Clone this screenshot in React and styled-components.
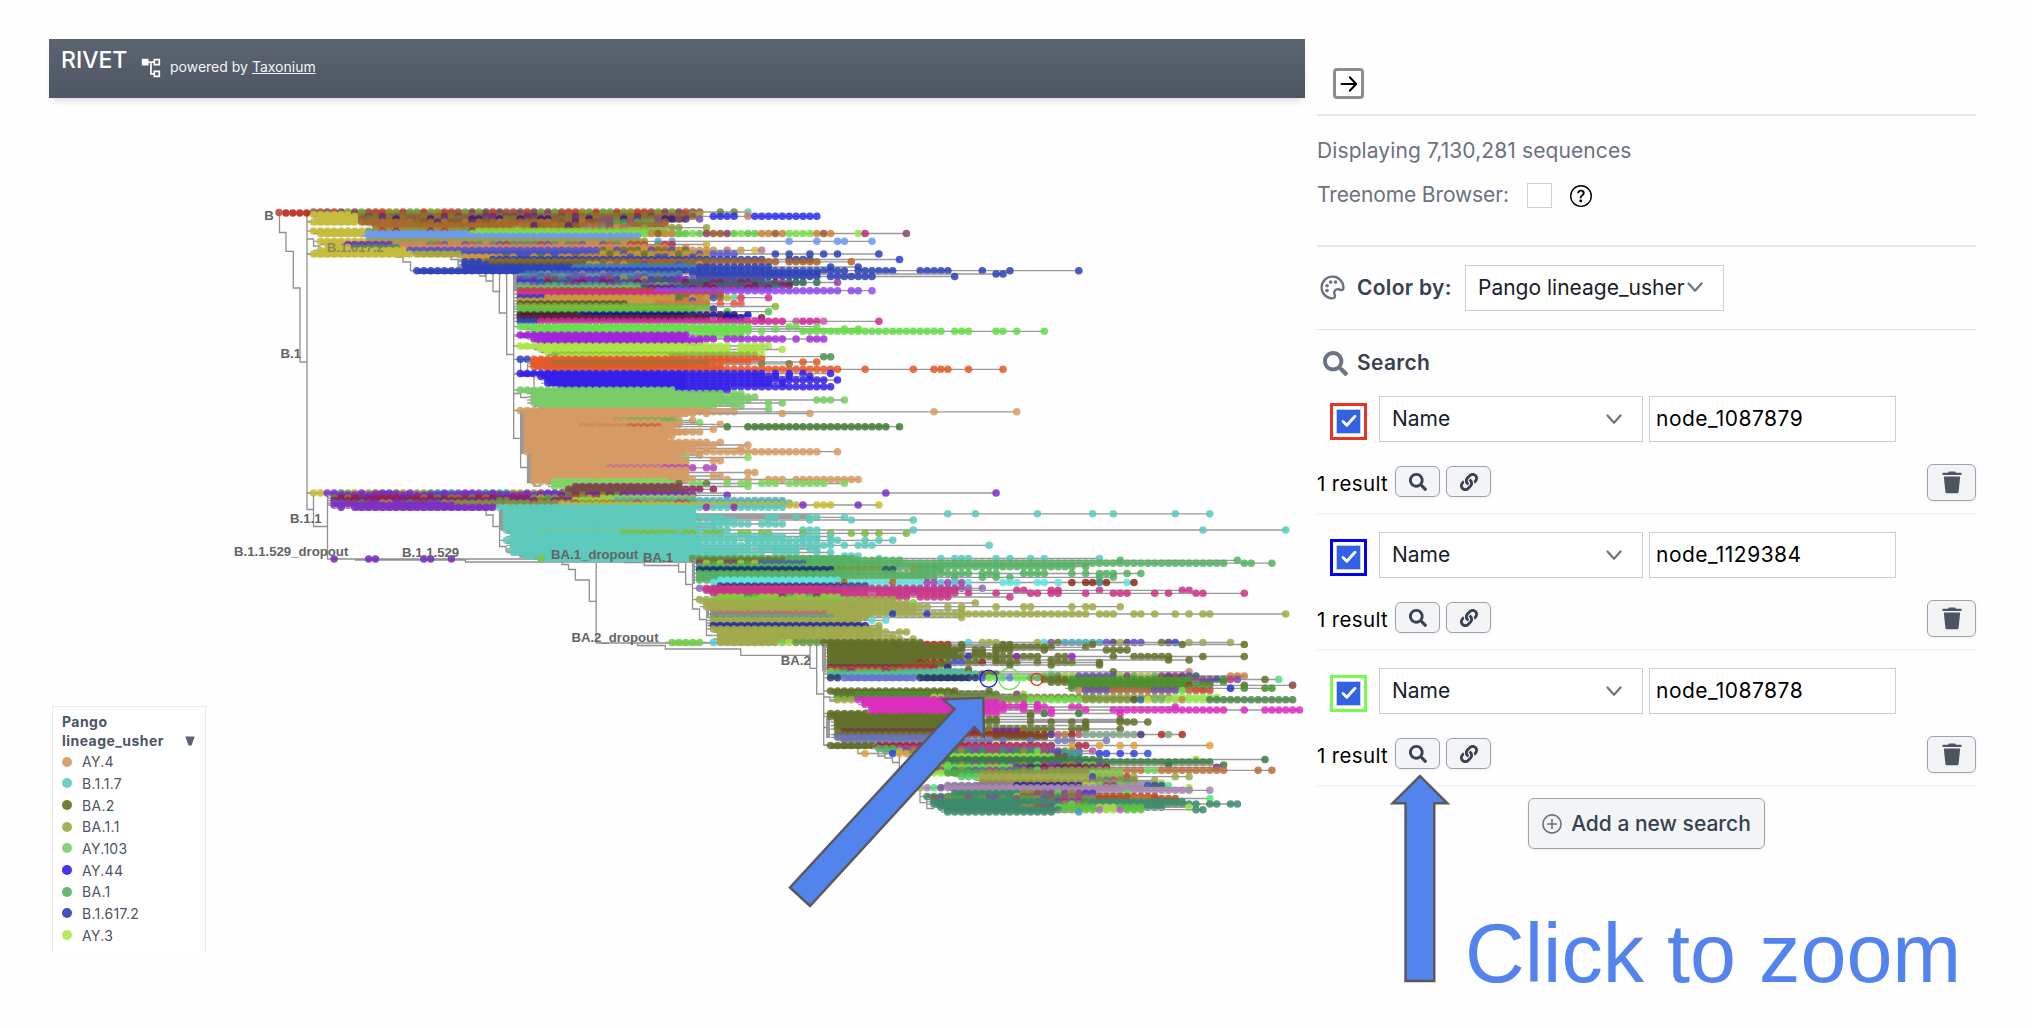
import React from "react";
import styled, { createGlobalStyle } from "styled-components";
import { BiPalette } from "react-icons/bi";
import { BsQuestionCircle } from "react-icons/bs";
import { FaSearch, FaLink } from "react-icons/fa";
import { CgListTree } from "react-icons/cg";

const Global = createGlobalStyle`
  * { box-sizing: border-box; }
  body { margin: 0; background: #fefefe; font-family: Inter, "Liberation Sans", sans-serif; }
`;

const Page = styled.div`
  position: relative;
  display: flex;
  gap: 12px;
  width: 2032px;
  height: 1028px;
  padding: 39px 56px 0 49px;
  overflow: hidden;
`;
const TreePane = styled.main`
  position: relative;
  width: 1256px;
  height: 914px;
  display: flex;
  flex-direction: column;
`;
const Header = styled.header`
  display: flex;
  align-items: flex-start;
  height: 59px;
  flex: none;
  padding-left: 12px;
  color: #fff;
  background: linear-gradient(#5c6371, #4e5563);
  box-shadow: 0 5px 7px -3px rgba(0, 0, 0, 0.16);
`;
const Brand = styled.h1`
  margin: 7px 0 0;
  width: 80px;
  font-size: 23px;
  line-height: 28px;
  font-weight: 450;
`;
const Powered = styled.div`
  margin-top: 18px;
  padding-left: 29px;
  font-size: 14px;
  line-height: 20px;
  color: #f3f4f6;
  white-space: nowrap;
  a { color: inherit; text-decoration: underline; }
`;
const LogoIcon = styled(CgListTree)`
  margin: 19px -20px 0 0;
  font-size: 20px;
  flex: none;
`;
const Chart = styled.svg`
  display: block;
  flex: none;
`;
const NodeLabel = styled.text`
  font: bold 13.2px "Liberation Sans", Arial, sans-serif;
  fill: #646464;
  fill-opacity: ${(p) => (p.$dim ? 0.6 : 1)};
`;
const Legend = styled.section`
  position: absolute;
  left: 3px;
  top: 667px;
  width: 154px;
  height: 247px;
  padding: 5px 10px 0 9px;
  border: 1px solid #e9e9eb;
  border-bottom: 0;
  background: #fff;
  color: #4b5563;
  font-size: 14px;
  letter-spacing: 0.3px;
`;
const LegendHead = styled.div`
  display: flex;
  justify-content: space-between;
  align-items: flex-end;
  margin-bottom: 0;
  font-weight: 700;
  line-height: 19.4px;
  letter-spacing: 0.45px;
`;
const LegendItem = styled.div`
  display: flex;
  align-items: center;
  gap: 10px;
  height: 21.7px;
`;
const Swatch = styled.span`
  width: 10px;
  height: 10px;
  border-radius: 50%;
  background: ${(p) => p.$color};
`;

const Side = styled.aside`
  width: 659px;
  flex: none;
  display: flex;
  flex-direction: column;
  font-size: 21px;
  line-height: 30px;
`;
const Rule = styled.hr`
  width: 100%;
  margin: 0;
  border: 0;
  height: ${(p) => (p.$thick ? 2 : 1.5)}px;
  flex: none;
  background: ${(p) => (p.$faint ? "#f3f4f6" : "#e4e6ea")};
`;
const CloseRow = styled.div`
  height: 75px;
  padding: 29px 0 0 16px;
`;
const CloseButton = styled.button`
  display: grid;
  place-items: center;
  width: 31px;
  height: 31px;
  padding: 0;
  border: 3px solid #8c8c8c;
  border-radius: 4px;
  background: #fff;
`;
const Info = styled.div`
  height: 129px;
  padding-top: 20px;
  color: #6b7280;
`;
const InfoLine = styled.div`
  display: flex;
  align-items: center;
  height: 30px;
  margin-bottom: 14px;
  letter-spacing: ${(p) => p.$track || 0}px;
  white-space: nowrap;
`;
const EmptyBox = styled.span`
  width: 25px;
  height: 25px;
  margin: 3px 18px 0 auto;
  border: 1px solid #cdd0dc;
  background: #fff;
`;
const InfoLabel = styled.div`
  display: flex;
  width: 253px;
`;
const Help = styled(BsQuestionCircle)`
  font-size: 22px;
  margin-top: 2px;
  color: #000;
`;
const ColorBy = styled.div`
  display: flex;
  align-items: center;
  height: 82px;
`;
const IconSlot = styled.span`
  display: flex;
  width: 40px;
  padding-left: ${(p) => p.$pad}px;
  color: #6b7280;
`;
const Strong = styled.span`
  width: 108px;
  font-weight: 600;
  letter-spacing: 0.3px;
  color: #374151;
  white-space: nowrap;
`;
const SelectBox = styled.div`
  display: flex;
  align-items: center;
  justify-content: space-between;
  width: ${(p) => p.$w}px;
  height: 46px;
  padding: 0 ${(p) => p.$right}px 0 12px;
  border: 1px solid #c8ccdb;
  background: #fff;
  color: #1a202c;
  white-space: nowrap;
`;
const Input = styled.div`
  display: flex;
  align-items: center;
  width: 247px;
  height: 46px;
  margin-left: 6px;
  padding-left: 6px;
  border: 1px solid #c8ccdb;
  background: #fff;
  color: #000;
  letter-spacing: 0.48px;
`;
const SearchHead = styled.div`
  display: flex;
  align-items: center;
  height: 66.3px;
`;
const SearchItem = styled.section`
  height: 136px;
`;
const Fields = styled.div`
  display: flex;
  align-items: center;
  height: 46px;
`;
const CheckFrame = styled.span`
  display: grid;
  place-items: center;
  width: 37px;
  height: 37px;
  margin: 4px 12px 0 13px;
  border: 3px solid ${(p) => p.$color};
  background: #fff;
`;
const CheckMark = styled.span`
  display: grid;
  place-items: center;
  width: 25px;
  height: 25px;
  border: 1px solid #cbd0e0;
  background: #3161e5;
`;
const Results = styled.div`
  display: flex;
  align-items: center;
  height: 71px;
  padding-top: 9px;
  color: #000;
`;
const ResultText = styled.span`
  width: 78px;
  padding-top: 3px;
  font-size: 20.5px;
  letter-spacing: 0.35px;
  white-space: nowrap;
`;
const Button = styled.button`
  display: flex;
  align-items: center;
  justify-content: center;
  width: ${(p) => p.$w}px;
  height: ${(p) => p.$h}px;
  margin: 0 6px 1px 0;
  padding: 0;
  border: 1px solid #9ca3af;
  border-radius: 6px;
  background: #f3f4f6;
  color: #374151;
  font: 500 21px Inter, sans-serif;
  box-shadow: 0 1px 3px rgba(0, 0, 0, 0.08);
  white-space: nowrap;
`;
const TrashButton = styled(Button)`
  margin: 0 0 0 auto;
`;
const AddRow = styled.div`
  display: flex;
  margin-top: -6px;
  padding-left: 211px;
`;
const AddButton = styled(Button)`
  gap: 9px;
`;
const Arrows = styled.svg`
  position: absolute;
  left: 0;
  top: 0;
  pointer-events: none;
`;
const Callout = styled.div`
  position: absolute;
  left: 1465px;
  top: 906px;
  font: 82.7px/95px "Liberation Sans", Arial, sans-serif;
  color: #5383ec;
  white-space: nowrap;
`;

const TAN = "#d69b64", TEAL = "#5dcabc", OLIVE = "#63702a", KHAKI = "#a0aa4c", GREEN = "#55b163";
const BLUE = "#2f42b8", VIVID = "#3420ea", LEAF = "#78cd68", LIME = "#aee548", YEL = "#c6bd3c";
const MAG = "#c93686", PINK = "#dc2fbe", PUR = "#7d30c4", SEA = "#3d8a6c", CORN = "#6d9bee";
const DK = "#4a8f2e", MAUVE = "#a787b0", ORG = "#e45a29", FOREST = "#3c7b46", SLATE = "#6b73b4";
const M1 = ["#9b8a2c", "#a8503c", "#7e9c38", "#7c4a54", "#b59a30", "#6aa03c", "#c0402c"];
const M2 = ["#7b4a4a", "#87604a", "#5b3a80", "#a06a2c", "#7a2f60", "#6f7f30", "#3c1a78"];
const M3 = ["#9e6428", "#a66a2a", "#8a5a30", "#a8742c", "#5b2a70"];
const M4 = ["#b06c60", "#6a8a70", "#a04a70", "#c88a58", "#7a58a0"];
const M5 = ["#c08a34", "#8a6a2c", "#4a52b0", "#c09a34", "#5c7a34"];
const M6 = ["#4a6ab0", "#4a90a0", "#5a60b8", "#6a9a90", "#7a5aa8"];
const M7 = ["#5c3ab8", "#6a5aa8", "#3f8a80", "#7d30c4", "#8a4a60", "#9a9a3a"];
const M8 = ["#a0203a", "#6a2aa8", "#8a7a2c", "#7a3a50", "#5a8a4a"];
const M9 = ["#5c9a48", "#a04a78", "#8a8a40", "#3c8a70", "#9a5a40", "#6ad050", "#7a50a0"];
const M10 = ["#7cdc48", "#c8863a", "#7cdc48", "#8a4060", "#66c84c", "#9a5a2c"];
const M11 = ["#8fc83c", "#5a8a3c", "#a8b848", "#6aa84c", "#80406a"];
const M12 = ["#6a2a70", "#2c6a5a", "#8a3a78", "#5a4a90", "#7a2048"];

/* Each row: y, then [colour or palette, first column, last column] runs. */
const ROWS = [
  [212, [M1, 5, 61], ["#6a8c38", 64, 64], ["#6a8c38", 66, 66], ["#6cc6a0", 68, 68]],
  [214.5, [YEL, 5, 10], [M1, 11, 57], ["#a0a83c", 60, 61]],
  [216.3, [YEL, 6, 11], [M2, 12, 57], ["#8a5a2c", 58, 60], ["#2c30dc", 63, 66], ["#d07868", 68, 68], ["#2c30ea", 69, 78]],
  [219, [YEL, 6, 11], [M2, 12, 59], ["#7a50b0", 61, 61]],
  [222, [YEL, 5, 11], ["#a66a2a", 12, 17], [M3, 18, 46], [M9, 47, 56]],
  [225.5, ["#a66a2a", 14, 34], [M3, 35, 48], ["#7a9a3c", 49, 50], ["#a66a2a", 51, 56]],
  [227.7, [M4, 45, 50], ["#8a9a3c", 53, 53], ["#8a9a3c", 57, 58], ["#9aa03c", 62, 62]],
  [231, [YEL, 5, 12], [M1, 13, 28], ["#82c83c", 29, 56]],
  [233.5, [YEL, 6, 12], [CORN, 13, 27], ["#7ee040", 28, 49], [M10, 50, 80], ["#8ae84c", 84, 84], ["#c02c80", 85, 85], ["#8a4470", 91, 91]],
  [236, [CORN, 13, 52]],
  [239, [CORN, 14, 51]],
  [241.3, [YEL, 6, 12], ["#9aa040", 13, 53], [CORN, 55, 55], [CORN, 57, 57], [CORN, 74, 74], [CORN, 78, 78], [CORN, 81, 82], [CORN, 86, 86]],
  [244.5, [YEL, 7, 9], ["#7a2cc8", 10, 16], ["#c08a60", 17, 20], [M4, 21, 50], ["#c04838", 51, 53], ["#4caa50", 55, 55], ["#c03434", 56, 57], ["#c0b83c", 62, 62]],
  [247.5, [YEL, 8, 10], ["#508a60", 11, 17], ["#d8845c", 18, 56], ["#e08060", 59, 59]],
  [250.3, [YEL, 6, 18], ["#5558c8", 19, 46], [M5, 47, 59], ["#c89060", 60, 63], ["#b8785c", 65, 65], ["#c8a04c", 67, 67], ["#dcc04c", 69, 69], ["#b0808c", 70, 70]],
  [254, [YEL, 5, 19], ["#a9a63c", 20, 26], ["#4a50c0", 27, 44], [M5, 45, 62], ["#5d58d0", 63, 66], [BLUE, 72, 72], [BLUE, 74, 74], [BLUE, 77, 77], [BLUE, 79, 79], [BLUE, 81, 81], [BLUE, 87, 87]],
  [257, ["#cf9a38", 27, 31], [M5, 32, 62]],
  [259.5, ["#c8983a", 27, 30], ["#2c34d0", 31, 33], [BLUE, 34, 70], [BLUE, 74, 77], ["#3040e0", 90, 90]],
  [261.8, [BLUE, 27, 29], ["#8a6a28", 30, 46], ["#a8622c", 47, 72], ["#a8622c", 74, 78], ["#b8682c", 83, 83]],
  [264.5, [BLUE, 27, 30], ["#6f6428", 31, 44], [M5, 45, 62]],
  [267, [BLUE, 27, 42], ["#3c7ac0", 43, 60], [BLUE, 61, 71], [BLUE, 80, 80], [BLUE, 84, 84]],
  [270.7, [BLUE, 20, 82], [BLUE, 84, 89], [BLUE, 93, 97], [BLUE, 102, 102], [BLUE, 106, 106], [BLUE, 116, 116]],
  [274, [M6, 36, 58], [BLUE, 60, 78], [BLUE, 104, 105]],
  [276.5, [M6, 35, 58], [BLUE, 61, 78], [BLUE, 80, 86], [BLUE, 98, 98]],
  [279.5, [M7, 35, 60], ["#4a50a8", 61, 70]],
  [282.5, [BLUE, 35, 38], [M12, 39, 76], ["#2c7a5a", 78, 78], ["#9a40a8", 81, 81]],
  [285.5, [M6, 35, 58], [M12, 59, 74]],
  [288, ["#70b868", 35, 52], [M12, 53, 71]],
  [290.7, ["#bf4440", 35, 54], ["#9048ec", 55, 81], ["#9048ec", 83, 84], ["#9a50ee", 86, 86]],
  [294, ["#cf2f94", 35, 56], ["#b84470", 57, 64]],
  [297.7, [BLUE, 35, 38], ["#c89a38", 39, 53], [M5, 54, 64], ["#b8b83c", 65, 65], ["#70d890", 66, 66], ["#d8406c", 67, 67], ["#cf3494", 71, 71]],
  [301, ["#c89a38", 35, 56], [M5, 57, 62]],
  [303.8, ["#5a6030", 35, 50], ["#e0704c", 55, 62], ["#e85a50", 64, 64], ["#e85a50", 66, 67]],
  [306.5, ["#80a83c", 35, 62], ["#8ab83c", 72, 72]],
  [309, ["#7abf3c", 35, 62], ["#3c3c98", 63, 63]],
  [311.7, ["#58c040", 35, 60], ["#4cb848", 65, 65], ["#58c050", 71, 71]],
  [315, ["#4a2030", 35, 43], ["#1c1290", 44, 66], ["#1610b0", 68, 68]],
  [317.8, ["#5a2444", 35, 62], ["#702048", 64, 64], ["#2010a0", 65, 67], ["#6a2c50", 70, 70]],
  [321.3, [BLUE, 35, 37], ["#d0289a", 38, 73], ["#c4509a", 75, 75], ["#d0289a", 76, 78], ["#cc60a8", 79, 79], ["#d02c94", 87, 87]],
  [326.7, ["#6ae04c", 35, 68], ["#6ae04c", 74, 75], ["#6ae04c", 78, 78]],
  [329, ["#6ae04c", 37, 68], ["#6ae04c", 72, 72], ["#6ae04c", 82, 82], ["#6ae04c", 84, 84]],
  [331.3, ["#6ae04c", 37, 68], ["#6ae04c", 70, 70], ["#66dc48", 76, 96], ["#66dc48", 98, 100], ["#66dc48", 104, 105], ["#66dc48", 107, 107], ["#66dc48", 111, 111]],
  [335, ["#a322dc", 35, 59], ["#6ae04c", 61, 67]],
  [339, ["#a322dc", 37, 63], ["#a830dc", 65, 73], ["#a830dc", 75, 75], ["#a830dc", 77, 79]],
  [342.5, ["#a322dc", 38, 61]],
  [346, [LIME, 35, 65], [LIME, 67, 71]],
  [349.5, [LIME, 38, 65], [LIME, 67, 70], [LIME, 73, 73]],
  [352.5, [LIME, 39, 65], [LIME, 67, 68]],
  [355, ["#90b83c", 40, 69], [LIME, 70, 70]],
  [356.7, [LIME, 41, 56], ["#4c9450", 79, 80]],
  [359.3, [BLUE, 35, 36], [ORG, 37, 70]],
  [362, [ORG, 37, 68], [ORG, 76, 76], [ORG, 78, 78]],
  [363.8, [ORG, 37, 39], ["#8a7a40", 40, 62], ["#8a7a40", 70, 70], ["#8a7a40", 74, 74]],
  [366.5, [ORG, 37, 64]],
  [369.3, [ORG, 39, 81], [ORG, 85, 85], [ORG, 92, 92], [ORG, 95, 97], [ORG, 100, 100], [ORG, 105, 105]],
  [373.5, [VIVID, 35, 70], [VIVID, 72, 72], [VIVID, 74, 74], [VIVID, 76, 76], [VIVID, 80, 80]],
  [376.5, [VIVID, 38, 72], [VIVID, 74, 74], [VIVID, 77, 77]],
  [380, [VIVID, 39, 79], [VIVID, 81, 81]],
  [383.2, [VIVID, 39, 71], [VIVID, 73, 73]],
  [386.7, [VIVID, 41, 80]],
  [390, [LEAF, 35, 57], [VIVID, 58, 65]],
  [393.5, [LEAF, 37, 64], [LEAF, 66, 67]],
  [397, [LEAF, 37, 69]],
  [400, [LEAF, 37, 68], [LEAF, 78, 80], [LEAF, 82, 82]],
  [403, [LEAF, 37, 66], [LEAF, 71, 71], [LEAF, 73, 73]],
  [406, [LEAF, 38, 63], [LEAF, 66, 67]],
  [409, [LEAF, 57, 62], [LEAF, 71, 71]],
  [410.5, [TAN, 35, 61]],
  [411.8, [TAN, 36, 66], [TAN, 95, 95], [TAN, 107, 107]],
  [413.5, [TAN, 36, 60], [TAN, 62, 62], [TAN, 73, 73], [TAN, 77, 77]],
  [417, [TAN, 36, 58]],
  [420.5, [TAN, 36, 48], ["#a4a45c", 49, 50], ["#78b058", 51, 57], [TAN, 60, 60]],
  [422.5, [TAN, 36, 55], ["#7fc060", 58, 58], ["#7fd868", 61, 61]],
  [424.3, [TAN, 36, 58], [TAN, 64, 64]],
  [426.7, [TAN, 36, 43], ["#cc8a58", 44, 50], ["#c8683c", 51, 55], [TAN, 56, 57], ["#417a30", 65, 65], ["#417a30", 68, 88], ["#417a30", 90, 90]],
  [429.3, [TAN, 36, 57], [TAN, 63, 63]],
  [432, [TAN, 36, 61]],
  [435.5, [TAN, 36, 57]],
  [439, [TAN, 36, 56]],
  [442.3, [TAN, 36, 62], [TAN, 64, 64]],
  [445, [TAN, 36, 61], [TAN, 63, 63], [TAN, 68, 68]],
  [448.5, [TAN, 36, 60], [TAN, 62, 62], [TAN, 67, 67]],
  [451.7, [TAN, 36, 78], [TAN, 81, 81]],
  [455, [TAN, 37, 58], [TAN, 61, 61]],
  [457.5, [TAN, 37, 57], ["#8ac860", 59, 59], ["#84dc64", 68, 68]],
  [460.7, [TAN, 37, 59], [TAN, 63, 64]],
  [464, [TAN, 37, 59]],
  [467.8, [TAN, 37, 47], ["#c07098", 48, 55], ["#ae48c0", 56, 60], ["#b04cc4", 62, 63]],
  [470, [TAN, 37, 59]],
  [472.5, [TAN, 37, 59], [TAN, 68, 69]],
  [476, [TAN, 37, 59], [TAN, 63, 64]],
  [479.5, [TAN, 37, 60], [TAN, 65, 65], [TAN, 68, 68], [TAN, 71, 73], [TAN, 75, 79], [TAN, 80, 84]],
  [481.5, [TAN, 37, 39], ["#7fd664", 40, 56]],
  [483.5, ["#7fd664", 40, 57], ["#5c7a34", 58, 58], ["#7fd664", 60, 61], ["#5c8030", 62, 62], ["#7fd664", 65, 65], ["#7fd664", 67, 68], ["#7fd664", 70, 72], ["#7fd664", 74, 79], ["#7fd664", 82, 82]],
  [486.5, ["#7fd664", 40, 42], ["#8a3c5c", 43, 58], ["#7fd664", 68, 68]],
  [489.3, ["#7a4c44", 42, 58], ["#8a2c64", 59, 61], ["#8a2c64", 63, 63]],
  [493, [YEL, 5, 6], [PUR, 7, 8], [M7, 9, 41], ["#7a4850", 42, 59], [PUR, 88, 88], [PUR, 104, 104]],
  [495.3, [PUR, 8, 40], [M8, 41, 50], [PUR, 51, 60], [PUR, 65, 65]],
  [498, [M8, 8, 36], [M1, 37, 46], ["#9acc48", 47, 60]],
  [500.5, ["#8a2070", 8, 30], [M8, 31, 42], ["#9ad048", 43, 48], ["#58b0b0", 49, 73]],
  [503, [M7, 8, 24], ["#7a9040", 25, 36], [M1, 37, 60], ["#58b8b0", 61, 74]],
  [505, [PUR, 8, 25], ["#8a8a44", 26, 40], ["#c8b43c", 41, 75], [PUR, 76, 76], ["#ccba38", 78, 80], [PUR, 84, 84], ["#ccba38", 87, 87]],
  [507.3, [PUR, 9, 9], [PUR, 11, 31], [TEAL, 32, 61], ["#8a34b0", 62, 62], [TEAL, 63, 65], ["#8a34b0", 66, 66], [TEAL, 67, 73]],
  [510.5, [TEAL, 33, 60]],
  [513.8, [TEAL, 33, 60], [TEAL, 97, 97], [TEAL, 101, 101], [TEAL, 110, 110], [TEAL, 118, 118], [TEAL, 121, 121], [TEAL, 130, 130], [TEAL, 135, 135]],
  [517.3, [TEAL, 33, 64], [TEAL, 71, 72], [TEAL, 75, 75], [TEAL, 77, 78], [TEAL, 82, 82]],
  [520, [TEAL, 33, 60], [TEAL, 63, 66], [TEAL, 71, 71], [TEAL, 77, 77], [TEAL, 83, 83], [TEAL, 92, 92]],
  [524, [TEAL, 33, 68], [TEAL, 70, 73]],
  [527, [TEAL, 33, 60], [TEAL, 63, 63]],
  [530, [TEAL, 33, 65], [TEAL, 76, 78], [TEAL, 92, 92], [TEAL, 134, 134], [TEAL, 146, 146]],
  [531.6, [TEAL, 34, 37], ["#70c890", 38, 60]],
  [533.3, [TEAL, 34, 49], ["#78be4c", 50, 57], ["#7cbc3c", 59, 60], ["#7cbc3c", 62, 64], ["#7cbc3c", 67, 68], ["#7cbc3c", 70, 71], ["#7cbc3c", 76, 76], ["#7cbc3c", 80, 80], ["#7cbc3c", 83, 83], ["#7cbc3c", 85, 85], ["#7cbc3c", 87, 87], ["#7cbc3c", 91, 91]],
  [536.5, [TEAL, 34, 73], [TEAL, 76, 78], [TEAL, 80, 80]],
  [540.3, [TEAL, 33, 66], [TEAL, 68, 78], [TEAL, 80, 81], [TEAL, 85, 85], [TEAL, 87, 87], [TEAL, 89, 89]],
  [543, [TEAL, 34, 60]],
  [545.3, [TEAL, 34, 80], [TEAL, 82, 82], [TEAL, 84, 86], [TEAL, 103, 103]],
  [549, [TEAL, 34, 68], [TEAL, 70, 75], [TEAL, 77, 78]],
  [552.5, [TEAL, 34, 70], [TEAL, 72, 75], [TEAL, 78, 78], [TEAL, 80, 80]],
  [556, [TEAL, 36, 60], [TEAL, 62, 66], [TEAL, 82, 84]],
  [558.5, [TEAL, 38, 59], ["#5c9448", 60, 60], [GREEN, 61, 83], [TEAL, 87, 87], [TEAL, 96, 96], [TEAL, 98, 100], [TEAL, 104, 104], [TEAL, 106, 106], [TEAL, 109, 109], [TEAL, 111, 111], [TEAL, 119, 119]],
  [560.3, ["#6a7c34", 61, 73], [GREEN, 74, 90], [GREEN, 122, 122], [GREEN, 139, 139]],
  [563.2, [M11, 61, 69], ["#48689c", 70, 76], [GREEN, 77, 137], [GREEN, 140, 141], [GREEN, 144, 144]],
  [566.7, [GREEN, 61, 115], [GREEN, 117, 117]],
  [569.5, ["#20386c", 61, 80], ["#6a9c40", 81, 87], ["#245a60", 88, 89], ["#8a9c44", 92, 92], [GREEN, 93, 96]],
  [573.5, [GREEN, 61, 100], [GREEN, 102, 104], [GREEN, 108, 111], [GREEN, 115, 115], [GREEN, 117, 117], [GREEN, 119, 121], [GREEN, 123, 123], [GREEN, 125, 125]],
  [577.3, [GREEN, 61, 95], [GREEN, 98, 98], [GREEN, 102, 102], [GREEN, 104, 104], [GREEN, 106, 106], [GREEN, 119, 119], [GREEN, 121, 121]],
  [580, [GREEN, 61, 63], ["#62e4dc", 64, 81]],
  [582.5, ["#62e4dc", 63, 80], ["#8a7c2c", 82, 82], ["#62e4dc", 83, 88], ["#a07024", 89, 89], ["#62e4dc", 90, 93], ["#9a48b8", 94, 95], ["#60b8e0", 96, 96], ["#9a48b8", 97, 97], ["#62b8e0", 98, 98], ["#9a48b8", 99, 99], ["#62e4dc", 100, 100], ["#62e4dc", 105, 107], ["#62e4dc", 110, 111], ["#62e4dc", 113, 113], ["#8a2c20", 115, 115], ["#8a2c20", 117, 118], ["#3c8a8a", 119, 119], ["#8a2c20", 120, 120], ["#62e4dc", 123, 123], ["#8a2c20", 124, 124]],
  [586, ["#3c3a84", 64, 85]],
  [588.3, ["#8c6cb8", 61, 61], [MAG, 62, 79], ["#a04a98", 80, 99], ["#9068b8", 100, 100], ["#9068b8", 102, 102]],
  [590.3, [MAG, 62, 98], [MAG, 107, 108], [MAG, 112, 113], [MAG, 119, 119], [MAG, 131, 132]],
  [593.3, [MAG, 63, 85], [MAG, 87, 98], [MAG, 100, 100], [MAG, 104, 104], [MAG, 109, 110], [MAG, 112, 113], [MAG, 117, 117], [MAG, 121, 123], [MAG, 127, 127], [MAG, 129, 129], [MAG, 133, 134], [MAG, 140, 140]],
  [597, [M11, 64, 81], [MAG, 82, 91], [MAG, 93, 97], [MAG, 106, 106]],
  [599.5, [KHAKI, 61, 62], ["#86c444", 63, 84], [KHAKI, 85, 89]],
  [603, [KHAKI, 62, 92], ["#88d850", 92, 92], [KHAKI, 101, 101]],
  [606.7, [KHAKI, 62, 94], [KHAKI, 97, 97], [KHAKI, 99, 99], [KHAKI, 104, 104], [KHAKI, 108, 109], [KHAKI, 115, 115], [KHAKI, 117, 118], [KHAKI, 122, 122]],
  [610, [KHAKI, 63, 92], [KHAKI, 99, 99]],
  [614, ["#a87a70", 63, 79], [KHAKI, 80, 88], ["#2d34b0", 89, 89], [KHAKI, 90, 93], ["#2d34b0", 94, 94], [KHAKI, 95, 103], [KHAKI, 104, 117], [KHAKI, 119, 121], [KHAKI, 124, 125], [KHAKI, 127, 127], [KHAKI, 130, 130], [KHAKI, 132, 132], [KHAKI, 134, 135], [KHAKI, 146, 146]],
  [617.5, ["#68a080", 63, 80], [KHAKI, 81, 85], [KHAKI, 99, 99]],
  [620.3, [KHAKI, 63, 84], ["#60d8d8", 86, 86], ["#60d8d8", 88, 88]],
  [623, [KHAKI, 63, 84]],
  [625.5, ["#2d2ca0", 63, 85], [KHAKI, 87, 87]],
  [629, [KHAKI, 63, 87]],
  [632, [KHAKI, 64, 88], [KHAKI, 90, 91]],
  [635.5, [KHAKI, 64, 87], [KHAKI, 89, 89]],
  [639, [KHAKI, 64, 90], [KHAKI, 92, 92]],
  [642.5, ["#78cc50", 57, 61], ["#58c8dc", 63, 63], [KHAKI, 64, 72], ["#78d048", 73, 73], ["#aed840", 74, 74], ["#6a9a44", 75, 78], [OLIVE, 79, 93], ["#62ccd8", 100, 100], [KHAKI, 102, 104], [KHAKI, 110, 110], ["#60d8d0", 111, 111], ["#7c58a0", 112, 112], [OLIVE, 113, 113], ["#48a8b4", 114, 119], ["#5c50c8", 120, 120], ["#5c3c78", 121, 121], [KHAKI, 122, 122], ["#5c3c78", 123, 123], ["#5c50c8", 124, 125], [OLIVE, 128, 128], ["#5c3c78", 129, 129], ["#3448c8", 130, 130], [KHAKI, 132, 132], [KHAKI, 134, 134], [KHAKI, 138, 138]],
  [644.5, [OLIVE, 80, 93], ["#a83820", 94, 97], [OLIVE, 99, 99], [OLIVE, 105, 106], [OLIVE, 118, 118], [OLIVE, 131, 131], [OLIVE, 140, 140]],
  [647.3, [OLIVE, 80, 97], [OLIVE, 99, 99], [OLIVE, 104, 112], [OLIVE, 117, 117]],
  [650, [OLIVE, 80, 99], [OLIVE, 101, 102], [OLIVE, 104, 106], [OLIVE, 111, 111], [OLIVE, 120, 123]],
  [653, [OLIVE, 80, 98], [OLIVE, 101, 102], [OLIVE, 104, 104]],
  [656.5, [OLIVE, 80, 99], ["#34309c", 100, 100], [OLIVE, 101, 106], ["#8020a0", 107, 107], [OLIVE, 108, 110], [OLIVE, 113, 114], ["#9020cc", 115, 115], [OLIVE, 121, 121], [OLIVE, 124, 129], [OLIVE, 134, 134], [OLIVE, 140, 140]],
  [660, [OLIVE, 80, 93], [OLIVE, 104, 104], [OLIVE, 112, 112], [OLIVE, 129, 129], [OLIVE, 132, 132]],
  [662.5, [OLIVE, 80, 92], ["#98301c", 93, 96], [OLIVE, 97, 97], ["#3c50c8", 98, 99], [OLIVE, 100, 101], ["#84301c", 102, 102], [OLIVE, 104, 107], [OLIVE, 110, 110], [OLIVE, 113, 115], [OLIVE, 119, 119]],
  [665, [OLIVE, 80, 97], [OLIVE, 106, 106], [OLIVE, 112, 112], [OLIVE, 119, 119]],
  [667.5, ["#5c3a50", 80, 90], ["#a83038", 91, 95], ["#2c2494", 97, 97]],
  [669.3, ["#c83c34", 80, 94], [OLIVE, 100, 100]],
  [671.8, [M11, 80, 90], ["#48b890", 91, 99], [OLIVE, 100, 100], [OLIVE, 121, 121], ["#c47888", 132, 132]],
  [674, ["#52bc98", 80, 101], [OLIVE, 102, 104], ["#68d0b0", 112, 112]],
  [676, [M11, 111, 115], ["#6450a0", 116, 121], [M11, 122, 128], [M12, 129, 133], ["#cc7c48", 138, 140]],
  [677.8, ["#2b3a6a", 80, 81], ["#6475d0", 82, 92], ["#2b3a6a", 93, 101], ["#4464c0", 102, 102], ["#70e44c", 103, 104], ["#66cc68", 105, 105], ["#5c84cc", 106, 106], ["#70e44c", 107, 108], ["#58b858", 109, 111]],
  [679.5, [OLIVE, 111, 114], [DK, 115, 132], ["#78508c", 133, 135], ["#3c4a80", 136, 136], ["#3f7a3c", 137, 137], ["#c03884", 138, 138], ["#7a50a0", 139, 139], [OLIVE, 143, 143], ["#58dc80", 145, 145]],
  [682.3, [OLIVE, 112, 114], [DK, 115, 132], ["#68508c", 134, 135], [DK, 137, 137]],
  [685.3, [DK, 115, 131], ["#a03c30", 132, 132], [DK, 133, 135], [OLIVE, 140, 140], ["#8a4048", 147, 147]],
  [688.3, [DK, 115, 132], ["#4cac3c", 134, 134], ["#2830d0", 138, 138], [DK, 140, 140], [DK, 143, 144]],
  [690.5, ["#c89068", 116, 116], ["#7850a0", 117, 120], ["#b06840", 121, 126], ["#7850a0", 127, 130], ["#70dc4c", 131, 131], ["#c86848", 132, 132], ["#cc4838", 133, 135]],
  [691, [OLIVE, 80, 98], [OLIVE, 103, 103]],
  [694.3, [OLIVE, 81, 83], ["#508830", 84, 97], [OLIVE, 98, 104], [M11, 107, 108]],
  [697.3, ["#4c8a30", 81, 94], ["#acc840", 95, 96], ["#6a8a48", 97, 108], ["#788c3c", 109, 118], ["#88a050", 119, 129], ["#9ce450", 130, 136]],
  [699.7, [KHAKI, 81, 83], [PINK, 84, 97], ["#7a9c40", 100, 108], ["#6cdc44", 109, 116], ["#7c9838", 117, 123], ["#505c28", 124, 124], ["#34708a", 125, 125], ["#c8d840", 126, 126], ["#78bc58", 127, 128], ["#a0dc50", 129, 130], ["#b89040", 131, 131], ["#98e858", 132, 134], ["#4a8648", 135, 147]],
  [702, [PINK, 85, 104]],
  [704.5, [PINK, 85, 104], [PINK, 105, 105], [PINK, 108, 108], [PINK, 110, 110]],
  [707, [PINK, 86, 108], [PINK, 110, 111], [PINK, 115, 116], [PINK, 130, 130]],
  [710, [PINK, 86, 105], [PINK, 108, 108], [PINK, 110, 110], [PINK, 112, 112], [PINK, 117, 117], [PINK, 121, 137], [PINK, 140, 140], [PINK, 143, 148]],
  [713.5, [OLIVE, 80, 85], [PINK, 86, 104], [OLIVE, 109, 109], ["#3c7a38", 111, 111], [PINK, 112, 112], ["#3c7a38", 116, 116], [PINK, 122, 122]],
  [716.5, [OLIVE, 80, 99], [OLIVE, 109, 109]],
  [719.5, [OLIVE, 81, 101], [OLIVE, 103, 104], [OLIVE, 122, 122]],
  [722, [OLIVE, 81, 101], [OLIVE, 102, 104], [OLIVE, 109, 109], [OLIVE, 112, 112], [OLIVE, 115, 115], [OLIVE, 117, 117], [OLIVE, 122, 124], [OLIVE, 126, 126]],
  [725.5, [OLIVE, 81, 100], [OLIVE, 117, 117]],
  [729, [OLIVE, 81, 103], [OLIVE, 104, 112], [OLIVE, 115, 117], [OLIVE, 122, 122]],
  [731.5, ["#7a3c40", 82, 96], [M8, 97, 109]],
  [734.5, ["#68702c", 81, 96], ["#a02818", 97, 108], ["#98301c", 109, 111], ["#483484", 112, 112], ["#c06070", 113, 113], ["#a88438", 114, 114], ["#a02c20", 115, 115], ["#c06070", 116, 116], ["#86a488", 117, 124], ["#483484", 125, 125], ["#b03024", 128, 128], ["#86a488", 129, 129], ["#b03024", 131, 131]],
  [737.3, [SLATE, 81, 99], ["#6c4c28", 104, 111]],
  [740.5, [SLATE, 82, 103], [SLATE, 105, 105], [SLATE, 109, 109], ["#7880bc", 113, 115], ["#7880bc", 120, 120]],
  [745.5, [OLIVE, 80, 86], ["#a02c38", 87, 112], ["#dca43c", 115, 115], ["#b03048", 116, 117], ["#dca43c", 119, 119], ["#dca43c", 122, 122], ["#dca43c", 124, 124], ["#dca43c", 135, 135]],
  [748.5, ["#4cb060", 87, 89], ["#b04498", 90, 112]],
  [751, ["#50b468", 88, 89], [M9, 90, 116], ["#c448b0", 118, 118]],
  [753.5, ["#dca43c", 85, 85], ["#3840dc", 89, 89], ["#dca43c", 90, 91], [M9, 92, 112], ["#3c50cc", 113, 113], ["#4898a0", 114, 116], ["#3048e0", 119, 120], ["#3840dc", 122, 122], ["#3840dc", 124, 124], ["#3058d8", 126, 126]],
  [756.5, ["#86dc40", 92, 112], ["#7c5040", 113, 114], ["#389890", 115, 116]],
  [759.5, [FOREST, 94, 119], ["#9ccc48", 133, 133], [FOREST, 143, 143]],
  [762, [FOREST, 94, 135]],
  [765, [M9, 94, 119], [FOREST, 129, 129], [FOREST, 137, 137]],
  [767.3, ["#70d448", 94, 106], [M12, 107, 120], ["#783c98", 136, 136]],
  [770.3, [M9, 94, 111], ["#8a9c44", 112, 122], ["#bc7440", 123, 125], ["#70d060", 126, 127], ["#b8703c", 128, 137], ["#b8703c", 142, 142], ["#b8703c", 144, 144]],
  [773, ["#90ec44", 94, 96], ["#4cac44", 97, 101], ["#889848", 102, 117], ["#7ad450", 118, 122]],
  [776.7, ["#58c868", 99, 101], [KHAKI, 102, 117], ["#3050a8", 118, 118], [KHAKI, 119, 122], ["#d03c3c", 123, 123], [KHAKI, 124, 124], [KHAKI, 130, 130], [KHAKI, 132, 132]],
  [780.3, [KHAKI, 102, 117], [M9, 118, 124], ["#a0a060", 127, 127]],
  [783, ["#9c9048", 102, 122], ["#a4c868", 128, 128]],
  [785.5, ["#8c789c", 97, 106], ["#2c2c8c", 107, 116], ["#9cdc48", 117, 118], [M9, 119, 122], ["#3458c8", 126, 126], ["#345c78", 127, 128], ["#60d898", 129, 129]],
  [787.7, ["#a0b85c", 93, 93], [MAUVE, 94, 94], ["#58dc88", 95, 95], ["#785098", 96, 96], [MAUVE, 97, 125], ["#98e050", 132, 132]],
  [790.3, [MAUVE, 98, 132], [MAUVE, 135, 135]],
  [793.3, [SEA, 98, 107], [M9, 108, 116], ["#5030c8", 117, 118], ["#58e060", 123, 123]],
  [796.5, [SEA, 94, 106], [M9, 107, 118], ["#b84c24", 119, 127]],
  [798.5, [M9, 95, 118], ["#b84c24", 119, 123], ["#cc7030", 124, 126], ["#b84c24", 127, 130], ["#58e878", 135, 135]],
  [801.5, [SEA, 95, 112], ["#9834a8", 113, 116], [SEA, 117, 131]],
  [804, [SEA, 95, 113], [M9, 114, 117], [SEA, 118, 133], [SEA, 135, 136], [SEA, 138, 139]],
  [807.3, [SEA, 96, 106], [M9, 107, 113], ["#54c440", 114, 118], ["#a8dc44", 119, 121], ["#54c440", 122, 125], [SEA, 126, 128], ["#9ce850", 132, 132]],
  [809.7, [SEA, 97, 113], ["#5cc43c", 114, 118], ["#b070a8", 119, 119], ["#98dc44", 120, 121], ["#c060b8", 122, 122], ["#5cc43c", 123, 125], [SEA, 133, 134]],
  [812, [SEA, 97, 112], ["#4c98c8", 116, 116]],
];
const LONE = [
  [212.5, "#c04a40", [0]],
  [213, "#b8281a", [1, 2, 3, 4]],
  [559, PUR, [8, 13, 14, 21, 22, 25]],
  [558.5, "#70cc40", [38]],
];

const EDGES = `
M279.5 213V232.5H286V251.3H293.3V288H300V362H307 M307 213V509.5H313.5 M307 239H313.5V246H320V250H326 M307 221.5H313 M307 254H313
M313.5 493V526.5H327.5 M327.5 493V559H465 M307 493H327
M395 257H403V262H410.5V270.7H416 M451 257V259.5H458V266H464 M458 261H464
M479 276H486V281H493V291.5H499.3V313H506.7 M486 272V277 M493 272V283 M499.5 272V293 M506.7 272V354.5H513.7 M513.7 266V438.3H520.6
M520.6 359V372M520.6 397.5H527.5 M520.6 390V398 M513.7 393.5H520 M520.6 410V467.5H527.5V482.7H534V486H541 M527.5 450V470
M527.5 364V376 M534 376V386 M513.7 336H520M513.7 374H520
M479.6 509H486V515H493V526.5H499.6 M499.6 510V546.5H506V551H520V557H527V559H541
M355 560H465.4V562H562V564.5H568.5V569.5H575.4V580H589.3V601.3H596.2 M465.4 559H541 M596.2 563V643H637.5V645.5H665.3V649H740.7V655.3H810 M637 643H665
M541 562H692 M623.6 562.5H644.3V565.5H678.6V572H685.7V584.5H692.5V609H699.5V619.5H706.5V635.5H713 M678.6 563V572 M685.7 563V584 M692.5 563V609
M665 643H720 M810 645V668.3H816.7V694H823.7V745H830 M816.7 645V694 M823.7 645V694 M823.7 727.5H830 M823.7 697H830V701H838
M857.9 746V753.5H865 M838 747H885V758H892.5V762.5H899.4V772H906V784H920V802.7H926.8V808.5H934 M878 752V756H885 M899.4 755V765 M920 788V800 M926.8 796V803
`;
const LABELS = [
  ["B", 264.3, 219.5], ["B.1.617.2", 326.7, 252], ["B.1", 280.6, 358], ["B.1.1", 290, 523],
  ["B.1.1.529_dropout", 234, 556.3], ["B.1.1.529", 402, 556.7], ["BA.1_dropout", 551, 559],
  ["BA.1", 643, 562], ["BA.2_dropout", 571.4, 642.3], ["BA.2", 780.8, 665],
];

const colX = (k) => 279 + k * 6.895;
const pick = (c, k, y) => (Array.isArray(c) ? c[(((k * 7919 + Math.round(y * 10) * 104729 + k * k * 31) >>> 2) % c.length)] : c);

/* Last column of the part of a clade in which neighbouring rows merge. */
const packedEnd = (y) => (y < 510 ? 59 : y < 558 ? 61 : y < 600 ? 82 : y < 643 ? 86 : y < 748 ? 100 : 114);

function Row({ y, packed, runs }) {
  const first = runs[0][1];
  const last = Math.max(...runs.map((r) => r[2]));
  const dots = [];
  const fills = [];
  runs.forEach(([c, a, b]) => {
    const end = Math.min(b, packedEnd(y));
    if (packed && end - a > 3) {
      const tone = Array.isArray(c) ? c[0] : c;
      fills.push(<path key={a} d={`M${colX(a)} ${y + 0.6}H${colX(end)}`} stroke={tone} strokeWidth="5.2" strokeOpacity="0.9" />);
    }
    for (let k = a; k <= b; k++) {
      dots.push(<circle key={k + "-" + a} cx={colX(k).toFixed(1)} cy={y} r="3.8" fill={pick(c, k, y)} />);
    }
  });
  return (
    <g>
      <path d={`M${colX(first - 1)} ${y}H${colX(last)}`} stroke="#9a9a9a" strokeWidth="1.3" />
      {fills}
      <g fillOpacity="0.86">{dots}</g>
    </g>
  );
}

function Tree() {
  return (
    <Chart width="1256" height="855" viewBox="49 98 1256 855" fill="none">
      <path d={EDGES} stroke="#909090" strokeWidth="1.3" />
      <path d="M514 270h4v20h-4zM520.6 412h4v42h-4zM527 454h4v28h-4zM500 508h4v22h-4zM692 562h3v22h-3zM706 606h3v12h-3zM822 645h4v26h-4zM826 718h4v20h-4z" fill="#9a9a9a" />
      <path d="M660 514h150v5h-150zM640 560h100v3h-100zM860 644h130v3h-130zM1120 781h38v6h-38zM1030 720h88v3h-88z" fill="#a0a0a0" />
      {ROWS.map(([y, ...runs], i) => (
        <Row key={y} y={y} runs={runs} packed={i + 1 < ROWS.length && ROWS[i + 1][0] - y <= 4.1} />
      ))}
      {LONE.map(([y, c, cols]) => cols.map((k) => (
        <circle key={y + "-" + k} cx={colX(k)} cy={y} r="3.7" fill={c} fillOpacity="0.9" />
      )))}
      <g strokeWidth="1.3">
        <circle cx="988.6" cy="678.7" r="8.5" stroke="#1c14e0" />
        <circle cx="1009.3" cy="679" r="10.6" stroke="#7cdc5c" />
        <circle cx="1036.8" cy="679.3" r="6" stroke="#e83020" />
      </g>
      {LABELS.map(([t, x, y]) => <NodeLabel key={t} x={x} y={y} $dim={t === "B.1.617.2"}>{t}</NodeLabel>)}
    </Chart>
  );
}

const LEGEND = [
  ["AY.4", "#d9a26e"], ["B.1.1.7", "#6dd0c3"], ["BA.2", "#717e38"], ["BA.1.1", "#a7b05a"], ["AY.103", "#84d375"],
  ["AY.44", "#4433ee"], ["BA.1", "#66b873"], ["B.1.617.2", "#4253b8"], ["AY.3", "#b8e95c"],
];
const SEARCHES = [
  ["node_1087879", "#ea3323"],
  ["node_1129384", "#0000f5"],
  ["node_1087878", "#75fb4c"],
];

const Chevron = () => (
  <svg width="16" height="11" viewBox="0 0 16 11" fill="none" stroke="#6b7280" strokeWidth="2.2" strokeLinecap="round" strokeLinejoin="round">
    <path d="M1.5 1.5L8 8.7L14.5 1.5" />
  </svg>
);
const Trash = () => (
  <svg width="20" height="23" viewBox="0 0 20 23" fill="#4b5563">
    <path d="M0.5 1.8H6L7 0.5H13L14 1.8H19.5V4H0.5Z" />
    <path d="M1.8 5.5H18.2L16.6 21Q16.4 22.3 15 22.3H5Q3.6 22.3 3.4 21Z" />
  </svg>
);
const Tick = () => (
  <svg width="16" height="14" viewBox="0 0 16 14" fill="none" stroke="#fff" strokeWidth="2.8" strokeLinecap="round" strokeLinejoin="round">
    <path d="M2 7.5L5.8 11.3L14 2.2" />
  </svg>
);

function Search({ name, color }) {
  return (
    <SearchItem>
      <Fields>
        <CheckFrame $color={color}><CheckMark><Tick /></CheckMark></CheckFrame>
        <SelectBox $w={264} $right={20}>Name<Chevron /></SelectBox>
        <Input>{name}</Input>
      </Fields>
      <Results>
        <ResultText>1 result</ResultText>
        <Button $w={45} $h={31}><FaSearch size={18} /></Button>
        <Button $w={45} $h={31}><FaLink size={18} /></Button>
        <TrashButton $w={49} $h={37}><Trash /></TrashButton>
      </Results>
      <Rule $faint />
    </SearchItem>
  );
}

export default function App() {
  return (
    <Page>
      <Global />
      <TreePane>
        <Header>
          <Brand>RIVET</Brand>
          <LogoIcon />
          <Powered>powered by <a>Taxonium</a></Powered>
        </Header>
        <Tree />
        <Legend>
          <LegendHead><span>Pango<br />lineage_usher</span>
            <svg width="10" height="19" viewBox="0 0 10 19"><path d="M0.3 4.5H9.7L6.5 13.5H3.5Z" fill="#5b6270" /></svg>
          </LegendHead>
          {LEGEND.map(([t, c]) => <LegendItem key={t}><Swatch $color={c} />{t}</LegendItem>)}
        </Legend>
      </TreePane>
      <Side>
        <CloseRow>
          <CloseButton>
            <svg width="18" height="18" viewBox="0 0 18 18" fill="none" stroke="#000" strokeWidth="2" strokeLinecap="round" strokeLinejoin="round">
              <path d="M1.5 9H16M9.8 2.3L16.2 9L9.8 15.7" />
            </svg>
          </CloseButton>
        </CloseRow>
        <Rule $thick />
        <Info>
          <InfoLine $track={0.1}>Displaying 7,130,281 sequences</InfoLine>
          <InfoLine $track={-0.12}><InfoLabel>Treenome Browser: <EmptyBox /></InfoLabel><Help /></InfoLine>
        </Info>
        <Rule />
        <ColorBy>
          <IconSlot $pad={1}><BiPalette size={29} /></IconSlot>
          <Strong>Color by:</Strong>
          <SelectBox $w={259} $right={20}>Pango lineage_usher<Chevron /></SelectBox>
        </ColorBy>
        <Rule />
        <SearchHead>
          <IconSlot $pad={6}><FaSearch size={25} /></IconSlot>
          <Strong>Search</Strong>
        </SearchHead>
        {SEARCHES.map(([n, c]) => <Search key={n} name={n} color={c} />)}
        <AddRow>
          <AddButton $w={237} $h={51}>
            <svg width="20" height="20" viewBox="0 0 20 20" fill="none" stroke="#6b7280" strokeWidth="1.6">
              <circle cx="10" cy="10" r="9.1" /><path d="M10 5V15M5 10H15" />
            </svg>
            Add a new search
          </AddButton>
        </AddRow>
      </Side>
      <Arrows width="2032" height="1028" viewBox="0 0 2032 1028" fill="#5383ec" stroke="#595959" strokeWidth="2.4">
        <path d="M790 887.5L810 906L974.3 727L984 736.7L983.2 697.7L943 699.3L954.6 709Z" />
        <path d="M1420 776L1447.5 803.3H1434.3V981H1405.5V803.3H1392.5Z" />
      </Arrows>
      <Callout>Click to zoom</Callout>
    </Page>
  );
}
